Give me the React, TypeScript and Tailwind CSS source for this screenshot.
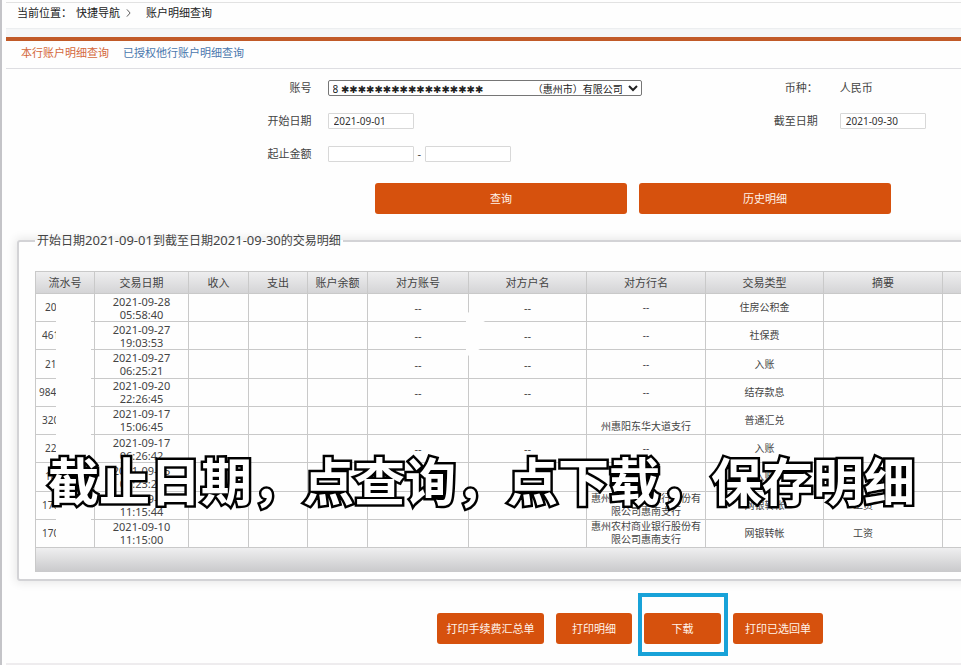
import React from "react";

type Row = {
  serial: string;
  indent: string;
  date: string;
  time: string;
  party: string;
  bank: string[];
  kind: string;
  note: string;
};

const dash = "--";
const bankLines = ["惠州农村商业银行股份有", "限公司惠南支行"];

const rows: Row[] = [
  { serial: "20", indent: "pl-[9px]", date: "2021-09-28", time: "05:58:40", party: dash, bank: [dash], kind: "住房公积金", note: "" },
  { serial: "461", indent: "pl-1.5", date: "2021-09-27", time: "19:03:53", party: dash, bank: [dash], kind: "社保费", note: "" },
  { serial: "21", indent: "pl-[9px]", date: "2021-09-27", time: "06:25:21", party: dash, bank: [dash], kind: "入账", note: "" },
  { serial: "984", indent: "pl-[3px]", date: "2021-09-20", time: "22:26:45", party: dash, bank: [dash], kind: "结存款息", note: "" },
  { serial: "320", indent: "pl-1.5", date: "2021-09-17", time: "15:06:45", party: "", bank: ["\u00a0", "州惠阳东华大道支行"], kind: "普通汇兑", note: "" },
  { serial: "22", indent: "pl-[9px]", date: "2021-09-17", time: "06:26:42", party: dash, bank: [dash], kind: "入账", note: "" },
  { serial: "18", indent: "pl-[9px]", date: "2021-09-15", time: "06:23:29", party: "", bank: [""], kind: "入账", note: "" },
  { serial: "170", indent: "pl-1.5", date: "2021-09-10", time: "11:15:44", party: "", bank: bankLines, kind: "网银转帐", note: "工资" },
  { serial: "170", indent: "pl-1.5", date: "2021-09-10", time: "11:15:00", party: "", bank: bankLines, kind: "网银转帐", note: "工资" },
];

const columns = [
  { name: "流水号", width: "w-[59px]" },
  { name: "交易日期", width: "w-[94px]" },
  { name: "收入", width: "w-[60px]" },
  { name: "支出", width: "w-[59px]" },
  { name: "账户余额", width: "w-[60px]" },
  { name: "对方账号", width: "w-[101px]" },
  { name: "对方户名", width: "w-[118px]" },
  { name: "对方行名", width: "w-[119px]" },
  { name: "交易类型", width: "w-[118px]" },
  { name: "摘要", width: "w-[119px]" },
  { name: "", width: "w-[119px]" },
];

const account = "8 " + "✱".repeat(17) + "\u00a0".repeat(19) + "（惠州市）有限公司";

const field =
  "h-4 w-[86px] rounded-[1px] border border-[#d8d8d8] bg-white px-[5px] text-[10px] leading-3 text-[#333] outline-none";
const action =
  "h-[31px] rounded-[3px] bg-[#d6510d] text-[11px] leading-4 text-[#fff3ea]";
const cell = "border border-[#c9c9c9] p-0 text-center";

export default function App() {
  return (
    <div className="relative overflow-hidden border-l-2 border-[#c4c4c8] bg-[#fefefe] pb-0.5 pl-1 font-['Noto_Sans','Noto_Sans_CJK_SC',sans-serif] text-[11px] leading-4 text-[#444]">
      <div className="h-[3px] border-b border-[#e2e2e2]" />
      <nav aria-label="当前位置" className="flex h-[26px] items-center border-b border-[#eceef0] pb-1.5 pl-[11px] text-[#222]">
        <span>当前位置：</span>
        <a href="#nav" className="ml-1">快捷导航</a>
        <svg aria-hidden="true" viewBox="0 0 6 10" className="ml-1.5 h-2 w-[5px]" fill="none" stroke="#333">
          <path d="M1 0.5 5 5 1 9.5" />
        </svg>
        <span className="ml-[15px]">账户明细查询</span>
      </nav>
      <div className="h-2 bg-[#f5f6f7]" />
      <nav aria-label="查询类型" className="flex h-8 items-center gap-3.5 border-t-4 border-b border-t-[#c15a28] border-b-[#dedee2] pb-1 pl-[15px]">
        <a href="#own" className="text-[#d4683c]">本行账户明细查询</a>
        <a href="#other" className="text-[#4a77ad]">已授权他行账户明细查询</a>
      </nav>

      <form onSubmit={(e) => e.preventDefault()} className="pt-0.5">
        <div className="grid auto-rows-[33px] grid-cols-[32%_1fr_12%_15%] items-center">
          <label htmlFor="account" className="text-right">账号</label>
          <div className="flex items-center pl-4">
            <select
              id="account"
              className="h-4 w-[314px] rounded-[2px] border border-[#767676] bg-white px-0 pt-0 pb-px font-['Noto_Sans','DejaVu_Sans','Noto_Sans_CJK_SC',sans-serif] text-[10px] leading-3 text-[#222]"
            >
              <option>{account}</option>
            </select>
          </div>
          <span className="text-right">币种：</span>
          <span className="pl-[22px]">人民币</span>

          <label htmlFor="from" className="text-right">开始日期</label>
          <div className="flex items-center pl-4">
            <input id="from" defaultValue="2021-09-01" className={field} />
          </div>
          <label htmlFor="to" className="text-right">截至日期</label>
          <div className="flex items-center pl-[22px]">
            <input id="to" defaultValue="2021-09-30" className={field} />
          </div>

          <label htmlFor="min" className="text-right">起止金额</label>
          <div className="flex items-center gap-1 pl-4">
            <input id="min" className={field} />
            <span>-</span>
            <input id="max" aria-label="最高金额" className={field} />
          </div>
        </div>
        <div className="mt-[13px] flex gap-3 pl-[369px]">
          <button type="submit" className={action + " w-[252px]"}>查询</button>
          <button type="button" className={action + " w-[252px]"}>历史明细</button>
        </div>
      </form>

      <fieldset className="mt-[18px] ml-[11px] w-max rounded-[3px] border-2 border-[#d3d3d6] px-4 pt-[22px] pb-[7px] shadow-[0_0_10px_2px_rgba(0,0,0,0.09)]">
        <legend className="px-0.5 text-xs leading-4 text-[#444]">
          开始日期<span className="text-[13px]">2021-09-01</span>到截至日期
          <span className="text-[13px]">2021-09-30</span>的交易明细
        </legend>
        <div className="relative">
          <table className="h-[277px] table-fixed border-collapse">
            <thead>
              <tr className="h-[22px] bg-linear-to-b from-[#eeeeef] to-[#d3d3d5]">
                {columns.map((c, i) => (
                  <th key={i} scope="col" className={cell + " font-normal " + c.width}>{c.name}</th>
                ))}
              </tr>
            </thead>
            <tbody className="leading-[13px]">
              {rows.map((r, i) => (
                <tr key={i}>
                  <td className={"border border-[#c9c9c9] text-left text-[10px] " + r.indent}>{r.serial}</td>
                  <td className={cell}>{r.date}<br />{r.time}</td>
                  <td className={cell} />
                  <td className={cell} />
                  <td className={cell} />
                  <td className={cell}>{r.party}</td>
                  <td className={cell}>{r.party}</td>
                  <td className={cell + " text-[10px]"}>
                    {r.bank.map((line) => <div key={line}>{line}</div>)}
                  </td>
                  <td className={cell + " text-[10px]"}>{r.kind}</td>
                  <td className="border border-[#c9c9c9] pr-10 text-center text-[10px]">{r.note}</td>
                  <td className={cell} />
                </tr>
              ))}
            </tbody>
          </table>
          <div className="absolute top-6 bottom-[26px] left-[21px] w-[35px] bg-[#fefefe]" />
          <svg aria-hidden="true" viewBox="0 0 40 46" className="absolute top-10 left-[431px] h-[46px] w-10" fill="#fefefe">
            <path d="M0 0 40 23 0 46Z" />
          </svg>
          <div className="h-6 border-x border-[#c9c9c9] bg-linear-to-b from-[#efeff0] to-[#c9c9cb]" />
        </div>
      </fieldset>

      <div className="mt-8 flex gap-3 border-b-2 border-[#eeecee] pb-[19px] pl-[431px]">
        <button type="button" className={action + " w-[107px]"}>打印手续费汇总单</button>
        <button type="button" className={action + " w-[76px]"}>打印明细</button>
        <div className="relative">
          <button type="button" className={action + " w-[77px]"}>下载</button>
          <div className="pointer-events-none absolute -top-5 -right-[7px] -bottom-3 -left-1.5 border-4 border-[#18a2d8]" />
        </div>
        <button type="button" className={action + " w-[90px]"}>打印已选回单</button>
      </div>

      <p className="pointer-events-none absolute inset-x-0 top-[449px] text-center font-['Noto_Sans_CJK_SC',sans-serif] text-[51px] leading-[60px] font-bold whitespace-nowrap text-white [-webkit-text-stroke:5px_#000] [paint-order:stroke_fill]">
        截止日期，点查询，点下载，保存明细
      </p>
    </div>
  );
}
